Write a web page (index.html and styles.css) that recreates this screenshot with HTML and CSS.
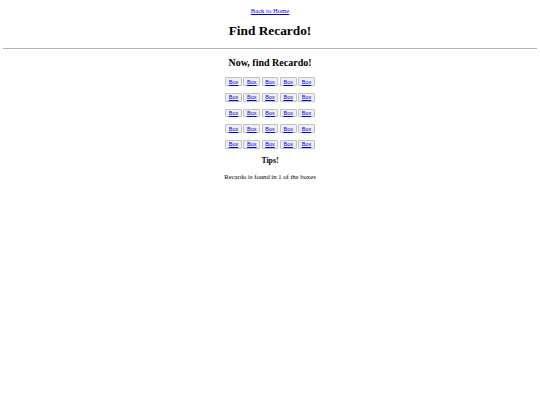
FILE: index.html
```html
<!DOCTYPE html>
<html>
<head>
<meta charset="utf-8">
<link rel="stylesheet" href="styles.css">
</head>
<body>
<p class="back"><a href="#">Back to Home</a></p>
<h1>Find Recardo!</h1>
<hr>
<h2>Now, find Recardo!</h2>
<p class="row"><button><a href="#">Box</a></button> <button><a href="#">Box</a></button> <button><a href="#">Box</a></button> <button><a href="#">Box</a></button> <button><a href="#">Box</a></button></p>
<p class="row"><button><a href="#">Box</a></button> <button><a href="#">Box</a></button> <button><a href="#">Box</a></button> <button><a href="#">Box</a></button> <button><a href="#">Box</a></button></p>
<p class="row"><button><a href="#">Box</a></button> <button><a href="#">Box</a></button> <button><a href="#">Box</a></button> <button><a href="#">Box</a></button> <button><a href="#">Box</a></button></p>
<p class="row"><button><a href="#">Box</a></button> <button><a href="#">Box</a></button> <button><a href="#">Box</a></button> <button><a href="#">Box</a></button> <button><a href="#">Box</a></button></p>
<p class="row"><button><a href="#">Box</a></button> <button><a href="#">Box</a></button> <button><a href="#">Box</a></button> <button><a href="#">Box</a></button> <button><a href="#">Box</a></button></p>
<h3>Tips!</h3>
<p>Recardo is found in 1 of the boxes</p>
</body>
</html>
```
FILE: styles.css
```css
html { background: #fff; }
body {
  margin: 3.33px;
  font-family: "Liberation Serif", serif;
  font-size: 6.67px;
  color: #000;
  text-align: center;
}
a { color: #0000ee; }
p { margin: 6.67px 0; }
.back { margin-top: 3.67px; }
h1 { font-size: 13.33px; margin: 8.93px 0; }
hr { border: none; border-top: 1px solid #b4b4b4; margin: 3.33px 0; }
h2 { font-size: 10px; margin: 8.3px 0 9.3px; }
.row { margin: 6.8px 0; }
button {
  font-family: "Liberation Sans", Arial, sans-serif;
  font-size: 5.56px;
  padding: 0.42px 2.5px;
  margin: 0;
  background: #efefef;
  border: 0.83px solid #c0c0c0;
  border-radius: 1px;
}
h3 { font-size: 7.8px; margin: 7.8px 0 7.4px; }
```
